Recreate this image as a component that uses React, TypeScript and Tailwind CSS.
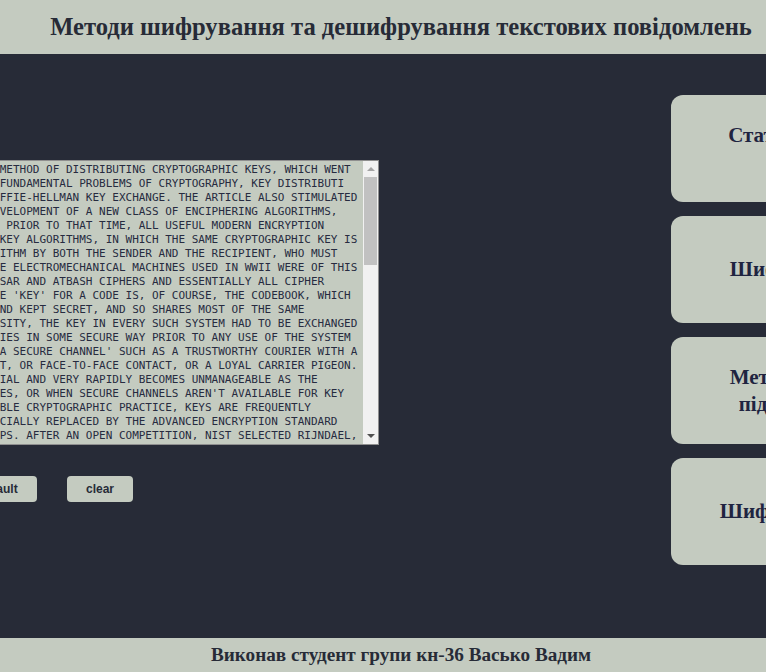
import React from "react";

// light sage panels on a dark slate page
const lines = [
  "IT INTRODUCED A RADICALLY NEW METHOD OF DISTRIBUTING CRYPTOGRAPHIC KEYS, WHICH WENT",
  "FAR TOWARD SOLVING ONE OF THE FUNDAMENTAL PROBLEMS OF CRYPTOGRAPHY, KEY DISTRIBUTI",
  "ON, AND HAS BECOME KNOWN AS DIFFIE-HELLMAN KEY EXCHANGE. THE ARTICLE ALSO STIMULATED",
  "THE ALMOST IMMEDIATE PUBLIC DEVELOPMENT OF A NEW CLASS OF ENCIPHERING ALGORITHMS,",
  "THE ASYMMETRIC KEY ALGORITHMS. PRIOR TO THAT TIME, ALL USEFUL MODERN ENCRYPTION",
  "ALGORITHMS HAD BEEN SYMMETRIC KEY ALGORITHMS, IN WHICH THE SAME CRYPTOGRAPHIC KEY IS",
  "USED WITH THE UNDERLYING ALGORITHM BY BOTH THE SENDER AND THE RECIPIENT, WHO MUST",
  "BOTH KEEP IT SECRET. ALL OF THE ELECTROMECHANICAL MACHINES USED IN WWII WERE OF THIS",
  "LOGICAL CLASS, AS WERE THE CAESAR AND ATBASH CIPHERS AND ESSENTIALLY ALL CIPHER",
  "SYSTEMS THROUGHOUT HISTORY. THE 'KEY' FOR A CODE IS, OF COURSE, THE CODEBOOK, WHICH",
  "MUST LIKEWISE BE DISTRIBUTED AND KEPT SECRET, AND SO SHARES MOST OF THE SAME",
  "PROBLEMS IN PRACTICE. OF NECESSITY, THE KEY IN EVERY SUCH SYSTEM HAD TO BE EXCHANGED",
  "BETWEEN THE COMMUNICATING PARTIES IN SOME SECURE WAY PRIOR TO ANY USE OF THE SYSTEM",
  "THE TERM USUALLY USED IS 'VIA A SECURE CHANNEL' SUCH AS A TRUSTWORTHY COURIER WITH A",
  "BRIEFCASE HANDCUFFED TO A WRIST, OR FACE-TO-FACE CONTACT, OR A LOYAL CARRIER PIGEON.",
  "THIS REQUIREMENT IS NEVER TRIVIAL AND VERY RAPIDLY BECOMES UNMANAGEABLE AS THE",
  "NUMBER OF PARTICIPANTS INCREASES, OR WHEN SECURE CHANNELS AREN'T AVAILABLE FOR KEY",
  "EXCHANGE, OR WHEN, AS IS SENSIBLE CRYPTOGRAPHIC PRACTICE, KEYS ARE FREQUENTLY",
  "THE DES STANDARD HAS BEEN OFFICIALLY REPLACED BY THE ADVANCED ENCRYPTION STANDARD",
  "(AES), DEVELOPED BY OTHER GROUPS. AFTER AN OPEN COMPETITION, NIST SELECTED RIJNDAEL,",
  "SUBMITTED BY TWO BELGIAN CRYPTOGRAPHERS, TO BE THE AES. DES, AND MORE SECURE",
  "VARIANTS OF IT (SUCH AS TRIPLE DES), ARE STILL USED TODAY; THEY HAVE BEEN",
  "INCORPORATED INTO MANY NATIONAL AND ORGANIZATIONAL STANDARDS. HOWEVER, ITS",
  "56-BIT KEY-SIZE HAS BEEN SHOWN TO BE INSUFFICIENT TO GUARD AGAINST BRUTE FORCE",
  "ATTACKS (ONE SUCH ATTACK, UNDERTAKEN BY THE CYBER CIVIL-RIGHTS GROUP ELECTRONIC",
  "FRONTIER FOUNDATION IN 1997, SUCCEEDED IN 56 HOURS.) AS A RESULT, USE OF STRAIGHT",
  "DES ENCRYPTION IS NOW WITHOUT DOUBT INSECURE FOR USE IN NEW CRYPTOSYSTEM DESIGNS,",
  "AND MESSAGES PROTECTED BY OLDER CRYPTOSYSTEMS USING DES, AND INDEED ALL MESSAGES",
  "SENT SINCE 1976 USING DES, ARE ALSO AT RISK. REGARDLESS OF DES' INHERENT QUALITY,",
  "THE DES KEY SIZE (56-BITS) WAS THOUGHT TO BE TOO SMALL BY SOME EVEN IN 1976,",
  "PERHAPS MOST PUBLICLY BY WHITFIELD DIFFIE. THERE WAS SUSPICION THAT GOVERNMENT",
  "ORGANIZATIONS EVEN THEN HAD SUFFICIENT COMPUTING POWER TO BREAK DES MESSAGES;",
  "CLEARLY OTHERS HAVE ACHIEVED THIS CAPABILITY. IN A GROUNDBREAKING 1976 PAPER,",
  "WHITFIELD DIFFIE AND MARTIN HELLMAN PROPOSED THE NOTION OF PUBLIC-KEY (ALSO,",
  "MORE GENERALLY, CALLED ASYMMETRIC KEY) CRYPTOGRAPHY IN WHICH TWO DIFFERENT BUT",
  "MATHEMATICALLY RELATED KEYS ARE USED - A PUBLIC KEY AND A PRIVATE KEY. A PUBLIC",
  "KEY SYSTEM IS SO CONSTRUCTED THAT CALCULATION OF ONE KEY (THE 'PRIVATE KEY') IS",
  "COMPUTATIONALLY INFEASIBLE FROM THE OTHER (THE 'PUBLIC KEY'), EVEN THOUGH THEY",
  "ARE NECESSARILY RELATED. INSTEAD, BOTH KEYS ARE GENERATED SECRETLY, AS AN",
  "INTERRELATED PAIR. THE HISTORIAN DAVID KAHN DESCRIBED PUBLIC-KEY CRYPTOGRAPHY AS",
  "THE MOST REVOLUTIONARY NEW CONCEPT IN THE FIELD SINCE POLYALPHABETIC SUBSTITUTION",
  "EMERGED IN THE RENAISSANCE. IN PUBLIC-KEY CRYPTOSYSTEMS, THE PUBLIC KEY MAY BE",
  "FREELY DISTRIBUTED, WHILE ITS PAIRED PRIVATE KEY MUST REMAIN SECRET. THE PUBLIC",
  "KEY IS TYPICALLY USED FOR ENCRYPTION, WHILE THE PRIVATE OR SECRET KEY IS USED FOR",
  "DECRYPTION. DIFFIE AND HELLMAN SHOWED THAT PUBLIC-KEY CRYPTOGRAPHY WAS POSSIBLE",
  "BY PRESENTING THE DIFFIE-HELLMAN KEY EXCHANGE PROTOCOL. IN 1978, RONALD RIVEST,",
  "ADI SHAMIR, AND LEN ADLEMAN INVENTED RSA, ANOTHER PUBLIC-KEY SYSTEM. IN 1997, IT",
  "FINALLY BECAME PUBLICLY KNOWN THAT ASYMMETRIC KEY CRYPTOGRAPHY HAD BEEN INVENTED",
  "BY JAMES H. ELLIS AT GCHQ, A BRITISH INTELLIGENCE ORGANIZATION, AND THAT, IN THE",
  "EARLY 1970S, BOTH THE DIFFIE-HELLMAN AND RSA ALGORITHMS HAD BEEN PREVIOUSLY",
  "DEVELOPED (BY MALCOLM J. WILLIAMSON AND CLIFFORD COCKS, RESPECTIVELY).",
  "THE DIFFIE-HELLMAN AND RSA ALGORITHMS, IN ADDITION TO BEING THE FIRST PUBLICLY",
  "KNOWN EXAMPLES OF HIGH QUALITY PUBLIC-KEY ALGORITHMS, HAVE BEEN AMONG THE MOST",
  "WIDELY USED. OTHERS INCLUDE THE CRAMER-SHOUP CRYPTOSYSTEM, ELGAMAL ENCRYPTION,",
  "AND VARIOUS ELLIPTIC CURVE TECHNIQUES.",
];

const cards = [
  ["Статистичний", "аналіз"],
  ["Шифр Цезаря"],
  ["Метод простої", "підстановки"],
  ["Шифр Віженера"],
];

// classic grey scrollbar beside the textarea
function ScrollBar() {
  return (
    <div className="flex w-[15px] shrink-0 flex-col bg-[#f1f1f1]">
      <div className="flex h-[16px] items-center justify-center">
        <svg width="8" height="5" viewBox="0 0 8 5">
          <polygon points="0,4 8,4 4,0" fill="#a3a3a3" />
        </svg>
      </div>
      <div className="mx-[1px] h-[88px] bg-[#c1c1c1]" />
      <div className="flex-1" />
      <div className="flex h-[16px] items-center justify-center">
        <svg width="8" height="5" viewBox="0 0 8 5">
          <polygon points="0,0 8,0 4,4" fill="#505050" />
        </svg>
      </div>
    </div>
  );
}

export default function App() {
  return (
    <div className="flex h-screen w-full flex-col overflow-hidden bg-[#272b37]">
      <header className="flex h-[54px] w-[802px] shrink-0 items-center justify-center bg-[#c4cbc0]">
        <h1 className="font-['Liberation_Serif',serif] text-[24.6px] font-bold text-[#272b37]">
          Методи шифрування та дешифрування текстових повідомлень
        </h1>
      </header>

      <main className="flex flex-1">
        <section className="-ml-[202px] flex w-[873px] shrink-0 flex-col pt-[106px]">
          <div className="flex h-[285px] w-[581px] border border-[#8f8f8f] bg-[#c4cbc0]">
            <textarea
              defaultValue={lines.join("\n")}
              wrap="off"
              spellCheck={false}
              className="h-full flex-1 resize-none overflow-hidden whitespace-pre bg-transparent p-[2px] font-['DejaVu_Sans_Mono',monospace] text-[11px] leading-[14px] text-[#272b40] outline-none"
            />
            <ScrollBar />
          </div>
          <div className="mt-[31px] flex gap-[30px] pl-[173px]">
            <button className="h-[26px] w-[66px] rounded-[4px] bg-[#c4cbc0] pr-[12px] font-['Liberation_Sans',sans-serif] text-[12px] font-bold text-[#272b37]">
              default
            </button>
            <button className="h-[26px] w-[66px] rounded-[4px] bg-[#c4cbc0] font-['Liberation_Sans',sans-serif] text-[12px] font-bold text-[#272b37]">
              clear
            </button>
          </div>
        </section>

        <aside className="flex w-[252px] shrink-0 flex-col gap-[14px] pt-[41px]">
          {cards.map((c, i) => (
            <div
              key={i}
              className="flex h-[107px] flex-col items-center justify-center rounded-[12px] bg-[#c4cbc0] px-4 text-center font-['Liberation_Serif',serif] text-[21px] font-bold leading-[27px] text-[#1f2440]"
            >
              {c.map((l) => (
                <span key={l}>{l}</span>
              ))}
            </div>
          ))}
        </aside>
      </main>

      <footer className="flex h-[34px] w-[802px] shrink-0 items-center justify-center bg-[#c4cbc0]">
        <p className="font-['Liberation_Serif',serif] text-[19.2px] font-bold text-[#272b37]">
          Виконав студент групи кн-36 Васько Вадим
        </p>
      </footer>
    </div>
  );
}
